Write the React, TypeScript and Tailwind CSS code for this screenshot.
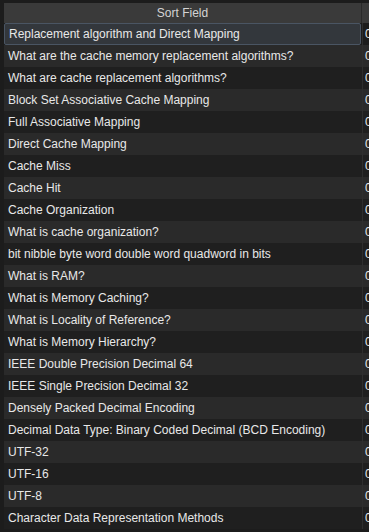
const rows = [
  "Replacement algorithm and Direct Mapping",
  "What are the cache memory replacement algorithms?",
  "What are cache replacement algorithms?",
  "Block Set Associative Cache Mapping",
  "Full Associative Mapping",
  "Direct Cache Mapping",
  "Cache Miss",
  "Cache Hit",
  "Cache Organization",
  "What is cache organization?",
  "bit nibble byte word double word quadword in bits",
  "What is RAM?",
  "What is Memory Caching?",
  "What is Locality of Reference?",
  "What is Memory Hierarchy?",
  "IEEE Double Precision Decimal 64",
  "IEEE Single Precision Decimal 32",
  "Densely Packed Decimal Encoding",
  "Decimal Data Type: Binary Coded Decimal (BCD Encoding)",
  "UTF-32",
  "UTF-16",
  "UTF-8",
  "Character Data Representation Methods",
];

export default function App() {
  return (
    <div className="h-[532px] w-[369px] overflow-hidden bg-[#1c1c1c] pl-[4px] pt-[3px] font-['Liberation_Sans',Arial,sans-serif] text-[12px] text-[#e8e8e8]">
      <div className="flex h-[20px] bg-[#3a3a3a] text-[#d4d4d4]">
        <div className="flex w-[358px] shrink-0 items-center justify-center border-r border-[#2a2a2a]">
          Sort Field
        </div>
        <div className="flex-1 bg-[#3a3a3a]" />
      </div>
      {rows.map((r, i) => {
        const selected = i === 0;
        const bg = selected ? "bg-[#1c1c1c]" : i % 2 === 1 ? "bg-[#2a2a2a]" : "bg-[#1f1f1f]";
        return (
          <div key={r} className={`flex h-[22px] ${bg}`}>
            <div className="w-[358px] shrink-0 pr-[1px]">
              <div
                className={`flex h-full items-center whitespace-nowrap pl-[4px] ${
                  selected ? "rounded-[2px] border border-[#4a5563] bg-[#33373c] pl-[3px]" : ""
                }`}
              >
                {r}
              </div>
            </div>
            <div className="flex flex-1 items-center overflow-hidden border-l border-[#2e2e2e] pl-[2px]">
              0
            </div>
          </div>
        );
      })}
    </div>
  );
}
